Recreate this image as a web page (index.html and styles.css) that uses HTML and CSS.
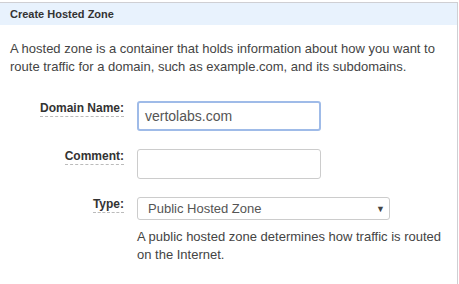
FILE: index.html
```html
<!DOCTYPE html>
<html>
<head>
<meta charset="utf-8">
<link rel="stylesheet" href="styles.css">
</head>
<body>
<div class="panel">
  <div class="panel-header">Create Hosted Zone</div>
  <div class="panel-body">
    <p class="intro">A hosted zone is a container that holds information about how you want to route traffic for a domain, such as example.com, and its subdomains.</p>
    <div class="form">
      <div class="label"><span>Domain Name:</span></div>
      <div class="field"><div class="input focused">vertolabs.com</div></div>
      <div class="label"><span>Comment:</span></div>
      <div class="field"><div class="input"></div></div>
      <div class="label"><span>Type:</span></div>
      <div class="field">
        <div class="select"><span>Public Hosted Zone</span><span class="arrow">▼</span></div>
        <p class="help">A public hosted zone determines how traffic is routed on the Internet.</p>
      </div>
    </div>
  </div>
</div>
</body>
</html>
```

FILE: styles.css
```css
html, body {
  margin: 0;
  padding: 0;
  background: #fff;
  font-family: "Liberation Sans", Arial, sans-serif;
  color: #444;
}
.panel {
  margin-top: 2px;
  width: 458px;
  height: 282px;
  border-top: 1px solid #cfcfd3;
  border-right: 1px solid #cfcfd3;
  box-sizing: border-box;
}
.panel-header {
  height: 22px;
  line-height: 22px;
  background: #e8f2fd;
  padding-left: 10px;
  font-size: 11px;
  font-weight: bold;
  color: #333;
}
.panel-body {
  padding: 0 10px;
}
.intro {
  margin: 15px 0 0;
  font-size: 13px;
  line-height: 18px;
  color: #444;
}
.form {
  display: grid;
  grid-template-columns: 114px 1fr;
  column-gap: 13px;
  row-gap: 18px;
  margin-top: 25px;
}
.label {
  text-align: right;
  font-size: 12px;
  font-weight: bold;
  color: #333;
  padding-top: 0;
}
.label span {
  border-bottom: 1px dashed #bbb;
  padding-bottom: 1px;
}
.input {
  width: 184px;
  height: 30px;
  box-sizing: border-box;
  border: 1px solid #ccc;
  border-radius: 3px;
  font-size: 14px;
  line-height: 28px;
  padding-left: 7px;
  color: #555;
}
.input.focused {
  border: 2px solid #9fbbe8;
  line-height: 26px;
  padding-left: 6px;
}
.select {
  width: 253px;
  height: 23px;
  box-sizing: border-box;
  border: 1px solid #ccc;
  border-radius: 3px;
  display: flex;
  justify-content: space-between;
  align-items: center;
  padding: 0 4px 0 10px;
  font-size: 13px;
  color: #555;
}
.arrow {
  font-size: 9px;
  color: #444;
}
.help {
  margin: 8px 0 0;
  font-size: 13px;
  line-height: 18px;
  color: #444;
}
```
